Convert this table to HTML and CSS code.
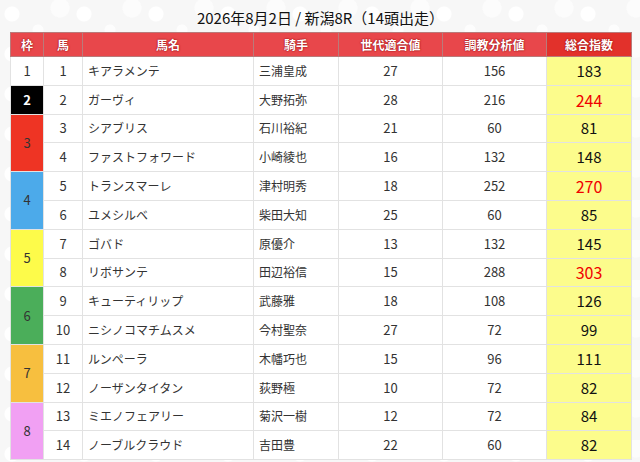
FILE: index.html
```html
<!DOCTYPE html>
<html lang="ja">
<head>
<meta charset="utf-8">
<link rel="stylesheet" href="styles.css">
</head>
<body>
<div class="page">
  <h1 class="title">2026年8月2日 / 新潟8R（14頭出走）</h1>
  <table class="race">
    <colgroup>
      <col class="c-waku"><col class="c-uma"><col class="c-name"><col class="c-jockey"><col class="c-gen"><col class="c-train"><col class="c-total">
    </colgroup>
    <thead>
      <tr>
        <th>枠</th><th>馬</th><th>馬名</th><th>騎手</th><th>世代適合値</th><th>調教分析値</th><th class="th-total">総合指数</th>
      </tr>
    </thead>
    <tbody>
      <tr><td class="waku w1">1</td><td class="num">1</td><td class="txt">キアラメンテ</td><td class="txt">三浦皇成</td><td class="num">27</td><td class="num">156</td><td class="total">183</td></tr>
      <tr><td class="waku w2">2</td><td class="num">2</td><td class="txt">ガーヴィ</td><td class="txt">大野拓弥</td><td class="num">28</td><td class="num">216</td><td class="total hi">244</td></tr>
      <tr><td class="waku w3" rowspan="2">3</td><td class="num">3</td><td class="txt">シアブリス</td><td class="txt">石川裕紀</td><td class="num">21</td><td class="num">60</td><td class="total">81</td></tr>
      <tr><td class="num">4</td><td class="txt">ファストフォワード</td><td class="txt">小崎綾也</td><td class="num">16</td><td class="num">132</td><td class="total">148</td></tr>
      <tr><td class="waku w4" rowspan="2">4</td><td class="num">5</td><td class="txt">トランスマーレ</td><td class="txt">津村明秀</td><td class="num">18</td><td class="num">252</td><td class="total hi">270</td></tr>
      <tr><td class="num">6</td><td class="txt">ユメシルベ</td><td class="txt">柴田大知</td><td class="num">25</td><td class="num">60</td><td class="total">85</td></tr>
      <tr><td class="waku w5" rowspan="2">5</td><td class="num">7</td><td class="txt">ゴバド</td><td class="txt">原優介</td><td class="num">13</td><td class="num">132</td><td class="total">145</td></tr>
      <tr><td class="num">8</td><td class="txt">リボサンテ</td><td class="txt">田辺裕信</td><td class="num">15</td><td class="num">288</td><td class="total hi">303</td></tr>
      <tr><td class="waku w6" rowspan="2">6</td><td class="num">9</td><td class="txt">キューティリップ</td><td class="txt">武藤雅</td><td class="num">18</td><td class="num">108</td><td class="total">126</td></tr>
      <tr><td class="num">10</td><td class="txt">ニシノコマチムスメ</td><td class="txt">今村聖奈</td><td class="num">27</td><td class="num">72</td><td class="total">99</td></tr>
      <tr><td class="waku w7" rowspan="2">7</td><td class="num">11</td><td class="txt">ルンペーラ</td><td class="txt">木幡巧也</td><td class="num">15</td><td class="num">96</td><td class="total">111</td></tr>
      <tr><td class="num">12</td><td class="txt">ノーザンタイタン</td><td class="txt">荻野極</td><td class="num">10</td><td class="num">72</td><td class="total">82</td></tr>
      <tr><td class="waku w8" rowspan="2">8</td><td class="num">13</td><td class="txt">ミエノフェアリー</td><td class="txt">菊沢一樹</td><td class="num">12</td><td class="num">72</td><td class="total">84</td></tr>
      <tr><td class="num">14</td><td class="txt">ノーブルクラウド</td><td class="txt">吉田豊</td><td class="num">22</td><td class="num">60</td><td class="total">82</td></tr>
    </tbody>
  </table>
</div>
</body>
</html>
```

FILE: styles.css
```css
html, body {
  margin: 0;
  padding: 0;
}
body {
  background-color: #f7f7f7;
  background-image:
    radial-gradient(circle at 12px 14px, #ffffff 7px, transparent 8px),
    radial-gradient(circle at 38px 30px, #fdfdfd 5px, transparent 6px),
    radial-gradient(circle at 60px 8px, #fcfcfc 9px, transparent 10px);
  background-size: 72px 40px;
  font-family: "Noto Sans CJK JP", "Noto Sans", sans-serif;
  color: #333;
  width: 640px;
  height: 462px;
  overflow: hidden;
}
.page {
  padding: 6px 9px 0 10px;
}
.title {
  margin: 0;
  height: 26px;
  font-size: 15px;
  font-weight: normal;
  line-height: 24px;
  text-align: center;
  color: #111;
}
.race {
  border-collapse: collapse;
  width: 621px;
  table-layout: fixed;
  background: #fff;
  border: 1px solid #d8d8d8;
}
.c-waku { width: 33px; }
.c-uma { width: 39px; }
.c-name { width: 171px; }
.c-jockey { width: 85px; }
.c-gen { width: 104px; }
.c-train { width: 104px; }
.c-total { width: 85px; }

.race th {
  height: 23px;
  padding: 0;
  background: #e8474b;
  color: #fff;
  font-size: 12px;
  font-weight: bold;
  line-height: 23px;
  border: 1px solid #b97a7a;
  text-shadow: 0 0 2px #9a0d12, 0 0 1px #9a0d12;
}
.race th.th-total {
  background: #e2312b;
}
.race td {
  height: 27.8px;
  padding: 0;
  border: 1px solid #e2e2e2;
  font-size: 12px;
  line-height: 16px;
  color: #333;
}
.race td.num {
  text-align: center;
  font-size: 13px;
}
.race td.txt {
  text-align: left;
  padding-left: 5px;
}
.race td.total {
  text-align: center;
  background: #fcfc8c;
  color: #111;
  font-size: 15px;
}
.race td.total.hi {
  color: #f00000;
  font-size: 16px;
}
.race td.waku {
  text-align: center;
  font-size: 13px;
}
.w1 { background: #fff; }
.w2 { background: #000; color: #fff !important; font-weight: bold; }
.w3 { background: #ee3424; }
.w4 { background: #4caaea; }
.w5 { background: #fdfb4a; }
.w6 { background: #4bae5a; }
.w7 { background: #f7bf3f; }
.w8 { background: #f1a0f3; }
```
